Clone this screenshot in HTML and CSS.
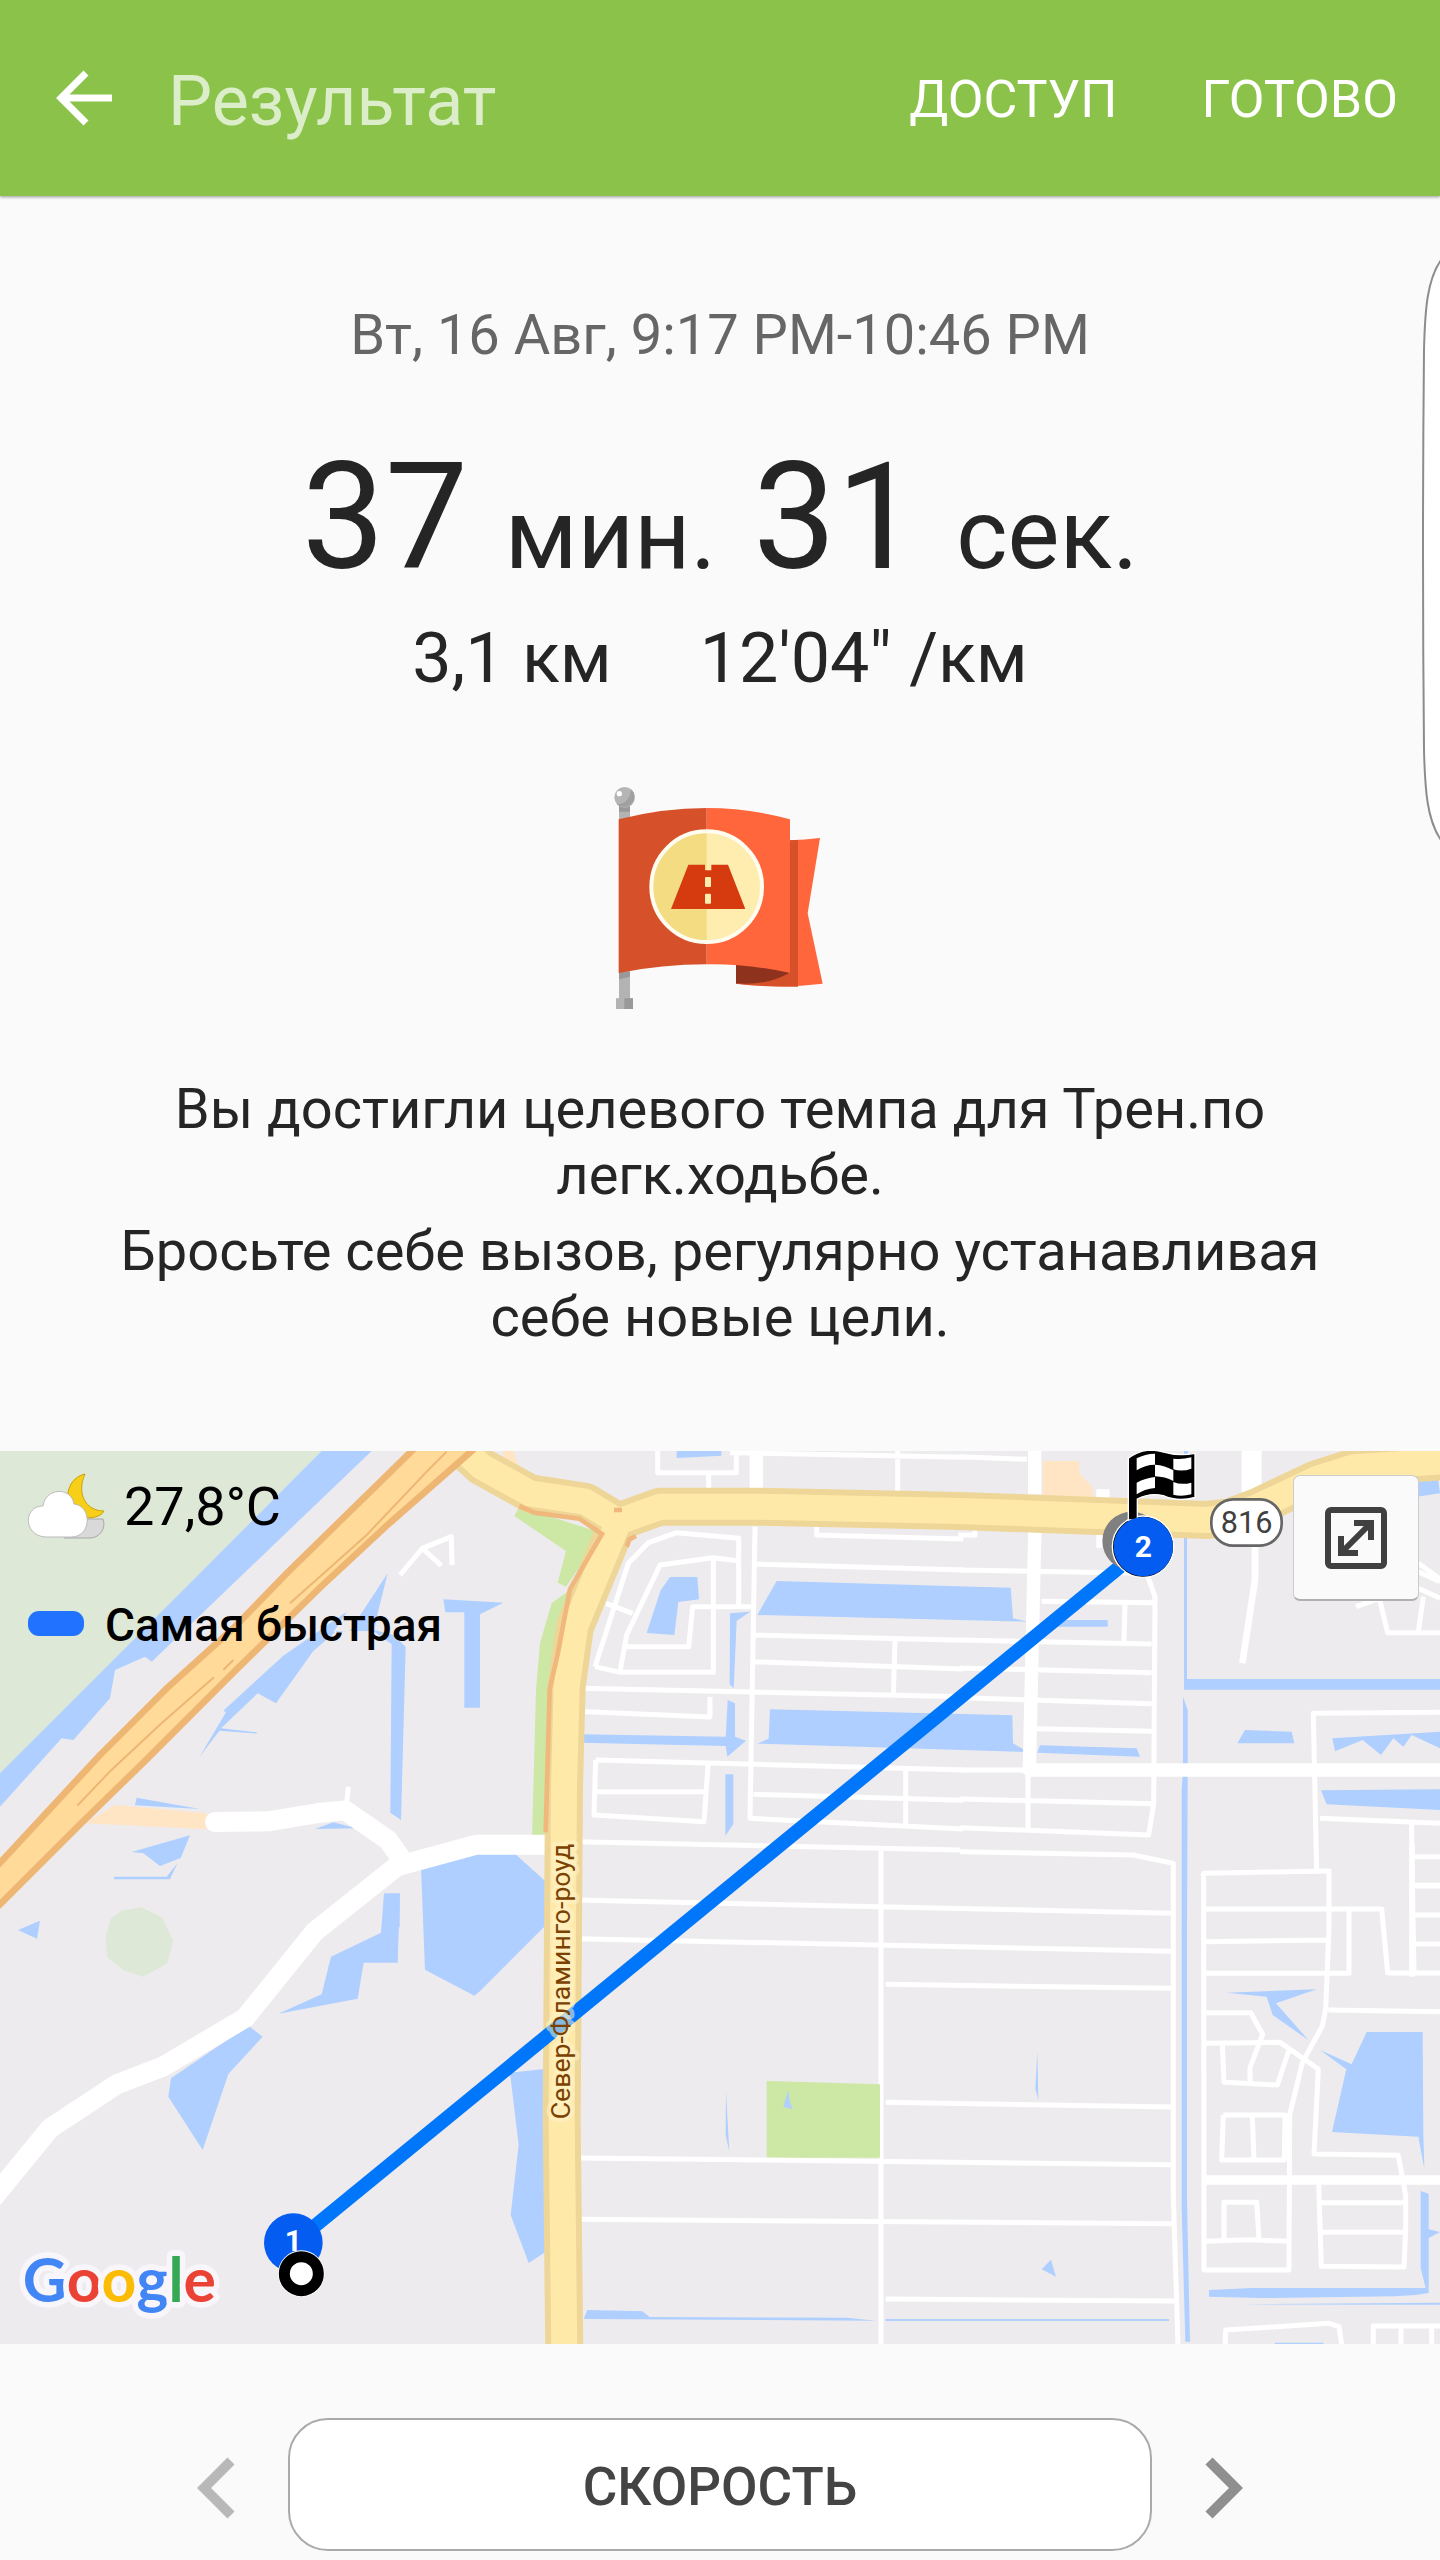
FILE: index.html
```html
<!DOCTYPE html>
<html lang="ru">

<head>
    <meta charset="UTF-8">
    <meta name="viewport" content="width=device-width, initial-scale=1.0">
    <title>Результат</title>
    <link rel="stylesheet" href="styles.css">
</head>

<body>
    <header class="topbar">
        <button type="button" class="back" aria-label="Назад">
            <svg viewBox="0 0 56 56" width="56" height="56" fill="none" stroke="#fff" stroke-width="7">
                <path d="M30 3L5 28l25 25M5 28h51" />
            </svg>
        </button>
        <h1>Результат</h1>
        <button type="button" class="action">ДОСТУП</button>
        <button type="button" class="action">ГОТОВО</button>
    </header>

    <main>
        <section class="summary">
            <p class="date">Вт, 16 Авг, 9:17 PM-10:46 PM</p>
            <p class="duration">37 <span>мин.</span> 31 <span>сек.</span></p>
            <p class="pace"><span>3,1 км</span><span>12'04" /км</span></p>

            <svg class="award" viewBox="0 0 840 810" width="280" height="270" role="img" aria-label="Цель достигнута">
                <!-- pole -->
                <path fill="#b3b3b3" d="M117 130h33v585h9v32h-51v-32h9z" />
                <path fill="#999" d="M133 715h26v32h-26zM117 139h33v16h-33zM117 635h33v15l-33 8z" />
                <circle cx="134" cy="112" r="31" fill="#b5b5b5" />
                <path fill="#a0a0a0" d="M154 88a31 31 0 0 1-44 44q36 4 44-44z" />
                <circle cx="118" cy="101" r="8" fill="#fff" />
                <!-- cloth -->
                <path fill="#ff663b" d="M629 241q46-1 91-7l-37 226 45 211q-130 15-260 0v-60h161z" />
                <path fill="#d65129" d="M629 241l25-1v440q-93 2-186-9v-60h161z" />
                <path fill="#8e321d" d="M468 610h161v28q-70 40-161 32z" />
                <path fill="#ff663b" d="M380 144q126 0 250 34v461q-124-28-250-26z" />
                <path fill="#d65129" d="M116 178q132-34 264-34v469q-133 0-264 26z" />
                <circle cx="380" cy="380" r="166" fill="#f4dc82" />
                <path fill="#ffedb0" d="M380 214a166 166 0 0 1 0 332z" />
                <circle cx="380" cy="380" r="166" fill="none" stroke="#fffcf0" stroke-width="12" />
                <path fill="#d63b10" d="M325 314h50v17h19v-17h50l52 133H273z" />
                <rect x="375" y="351" width="18" height="30" rx="3" fill="#ffedb0" />
                <rect x="375" y="401" width="18" height="30" rx="3" fill="#ffedb0" />
            </svg>

            <p class="message">Вы достигли целевого темпа для Трен.по легк.ходьбе.</p>
            <p class="message">Бросьте себе вызов, регулярно устанавливая себе новые цели.</p>
        </section>

        <section class="map" aria-label="Карта маршрута">
            <svg class="map-canvas" viewBox="0 0 4320 2679">
                <rect width="4320" height="2679" fill="#edebee" />

                <!-- north-west -->
                <g transform="translate(0 -33)">
                    <path class="wood" d="M0 33h965L350 650 0 1000z" />
                    <path class="water" d="M965 33h150L455 665l-20-15-90 40-15 85-110 125-35-5L0 1100V1000L350 650z" />
                    <path class="water" d="M1163 400l-30 120-10 50 57 15 37 35-14 520-32-22 4-505-55-40h-110l-70 60-112 157-55-30-110 105 107 12v4l-112-9-60 80 80-135-8-5 180-165 180-125 10-5-40 60 50-5zM1330 478l180 10-70 35v280h-47V517h-57zM410 1073l190 34-195-11zM395 1236l175-50-28 68-62 24-50-38zM342 1310h158l32-40-22 48H342zM945 1167l55-20 70 18zM1152 1362h47v100h-47z" />
                    <path class="ramp" d="M345 1095l275 25v48l-365-18z" />
                    <path class="way" d="M1200 405l67-80 87-35 2 85M1267 325l57 52M1045 1040l-5 50" />
                </g>
                <!-- south-west -->
                <g transform="translate(0 1287)">
                    <path class="water" d="M54 150l66-28-9 54zM345-3h160zM1152 40h48l-7 208h-102l-18 108-238 45 130-58 28-113 150-72zM1263-35l35-35 240-15 100 90v130l-60 60-140 140-15 12-148-78zM745 437l43 33-103 112-77 228-103-160 8-55z" />
                    <path class="wood" d="M365 92l60-10 60 30 35 70-18 68-72 40-60-20-48-38-5-60 15-55z" />
                </g>
                <!-- north -->
                <g transform="translate(1440 -33)">
                    <path class="water" d="M590 33h134v14l-134 7zM570 411h82l5 67-62 8-12 99-83-6 42-128zM890 423l702 20 7 92 45 10-812-20zM750 520l60-5-40 28-9 202-12-12zM743 780l22 10v100l33 12-56 48-5-32-432-10v-25l432 7zM870 808l727 18 2 84 45 26-812-25 34-15zM736 1003h24v150l-24 34z" />
                    <path class="park" d="M118 200l250 80-110 160-25-12 25-95-155-105zM262 455l-50 745h-56l12-450 12-140 35-120z" />
                    <path class="ramp" d="M66 33h35l25 75 50 30-90-40z" />
                    <path class="way" d="M533 33v65h236V33M686 98v55M1253 33v120M750 38l700 14M345 680l100-310 60-62 85-30 186 17v198M420 695l20-110 100-210 158-22 75 9M700 355v342H420l-75-17M378 490l80 30M440 620h186l12-120h175M1010 255v30l440 12M830 372l620 18M825 585l625 16M1245 600l-5 165M825 665l625 22M300 745l1150 25M300 815h20l370 16v-60M347 960l1103 30M347 960l-5 165 330 20 12-170M350 1055h330M820 1063l630 18M1277 985v175M825 260l-15 875 640 32M290 1205l1150 25M1203 1230v1500" />
                    <path class="street" d="M829 33v130" />
                </g>
                <!-- south -->
                <g transform="translate(1440 1287)">
                    <path class="water" d="M90 578l110-12v548l-54 35-54-144 24-210zM738 635l10 180-11-50zM322 1290l165 4 22 17 590 2 90 9-878-5zM1217 1317h850v6h-850z" />
                    <path class="park" d="M860 603l340 10v220H860z" />
                    <path class="water" d="M925 630l3 30 10 28-28-8z" />
                    <path class="way" d="M290 60l1790 40M290 176l1790 38M1217 313l860 12M1217 667l860 14M300 834l1780 20M300 1018l1780 13M1217 1257l865 6" />
                </g>
                <!-- north-east -->
                <g transform="translate(2880 -33)">
                    <path class="ramp" d="M248 63h107l5 40 35 35 8 45H248z" />
                    <path class="water" d="M672 33h12v25h-12zM672 190l9 1v526h760v32H672zM290 540h153v20H290zM855 870l140 5 8 35H832zM232 938l8-22 290 9 10 25zM1117 895l323-20v50l-85-40-25 35-30-25-37 50-55-45-83 34zM1083 1051l357-3v62l-340-17zM669 770l14 40v205l-2 450v820l9 420h-14l-11-400V1050l4-60zM1370 110l60-25 10 75-70 10z" />
                    <path class="way" d="M-5 50l206 8M-5 285h50v-15M0 390l560 10 25 70-4 620-15 95-566-22M245 484l335 4M495 490l-3 115M0 600l575 12M0 684l575 14M0 773l575 18M230 866l345 8M0 990h190l14 10v165M0 1077l575 14M0 1235l520 10 120 25v1000l15 480M1440 817l-380 3 10 480M1375 395l65 30M1375 445l65 30M1188 500l70-25 25 103h157M1390 470l-15 105M1375 370l70 50M1080 1135l365 15M1355 1150v460M1363 1250h77M1363 1336h77" />
                    <path class="street" d="M429 148v175M224 33v130M225 250l-17 740H1440M208 970v30" />
                    <path class="road" d="M875 33v150" />
                    <path class="lane" d="M885 310v110l-38 250" />
                </g>
                <!-- south-east -->
                <g transform="translate(2880 1287)">
                    <path class="water" d="M800 338l270-10-122 42 97 110-107-75-18-55zM1080 510l95 43 45-97h168l2 310 3 100-18-96-259-14 43-188zM1382 933l24 8v107l34 8-34 18v165q-50 10-100 10l-400 5-159-4v-20l130-6h520l-15-60zM232 515l3 145-9-35zM273 1139l15 51-43-22zM945 1388h145v8H945zM850 1273l590-5v6z" />
                    <path class="way" d="M1357-110v110l5 275M1440 18h-77M1440 105h-77M1440 192h-77M731-10l1 1180h255l2-470M727-10l5-10 375-7v170l-10 245-10 50-60 110-40 165M737 87h528l18 192h157M737 185l365-5M737 280h430V90M1105 390l335 5M737 398h135l36 65-38 100v45M737 490l223-3 115 80-13 255 253 4 22 120v100l-5 115-248-2-8-250M787 490l5 117 160 8 35-105M790 705h185l-2 135H785l5-135M877 710l5 130M792 1075V967h98l7 110M737 1084l130-5 118 5M1085 968h250M1085 1057h250M795 1400l2-50 310-20 30 10 9 60M1240 1400v-62h200M1323 1340v60M1415 1340v60" />
                    <path class="street thin" d="M737 900h703" />
                </g>

                <!-- local roads -->
                <path class="road" d="M645 1113l160-2 150-25 80-8 130 90 35 50" />
                <path class="road" d="M-20 2240l170-208 200-132 140-54 245-145 210-260 245-195 240-65h230" />

                <!-- main roads -->
                <g transform="translate(1440 -33)">
                    <path class="main-edge" d="M-60 20l65 60 145 80 165 25 100 60 125-45h300l600 13 740 27 70-8 80-30 180-85 110-35 300-20M415 245L285 560l-25 180-8 300-7 1000 8 700" />
                    <path class="main-fill" d="M-60 20l65 60 145 80 165 25 100 60 125-45h300l600 13 740 27 70-8 80-30 180-85 110-35 300-20M415 245L285 560l-25 180-8 300-7 1000 8 700" />
                    <path class="curb" d="M118 198l45 20 135 18 68 46-96 165-38 200-23 100-12 430M402 210h24M440 320l8-22 20-10" />
                </g>

                <!-- highway -->
                <g transform="translate(0 -33)">
                    <path class="highway" d="M-20 1290l320-345 200-200 200-180 160-165L1235 33l60-60h180l-60 60-245 215-210 195-260 255-260 260-200 195-260 260z" />
                    <path class="median" d="M232 1097l100-105 150-140 160-140M670 690l30-30M870 490l230-205 180-190 60-60" />
                </g>

                <!-- route -->
                <path d="M880 2378L3430 290" stroke="#0077fa" stroke-width="42" />

                <text class="street-name" transform="translate(1710 2005) rotate(-90)">Север-Фламинго-роуд</text>

                <g class="shield">
                    <rect x="3634" y="145" width="211" height="139" rx="66" />
                    <text x="3740" y="246">816</text>
                </g>

                <!-- finish -->
                <g transform="translate(2880 -33)">
                    <circle cx="515" cy="303" r="88" fill="#808080" />
                    <circle cx="549" cy="320" r="92" fill="#000" stroke="#fff" stroke-width="4" />
                    <path d="M505 240V55q45-35 100-20 50 15 100 5v132q-50 15-95-5-40-10-78 10v63z" fill="#000" stroke="#fff" stroke-width="4" />
                    <path fill="#fff" d="M530 55q25-14 55-14v33q-30 0-55 17zM640 56q25 4 54-4v34q-28 10-54 2zM585 74q30 2 55 17v32q-25-13-55-14zM530 128q26-14 55-17v33q-32 3-55 19zM640 126q25 10 54 2v35q-30 8-54 1z" />
                </g>
                <circle class="pin" cx="3430" cy="287" r="89" />
                <text class="pin-text" x="3430" y="318">2</text>

                <!-- start -->
                <circle class="pin" cx="880" cy="2375" r="88" />
                <text class="pin-text" x="880" y="2400">1</text>
                <circle cx="904" cy="2468" r="70" fill="#fff" />
                <circle cx="904" cy="2468" r="51" fill="#fff" stroke="#000" stroke-width="33" />

                <text class="google" x="68" y="2553"><tspan fill="#4285f4">G</tspan><tspan fill="#ea4335">o</tspan><tspan fill="#fbbc05">o</tspan><tspan fill="#4285f4">g</tspan><tspan fill="#34a853">l</tspan><tspan fill="#ea4335">e</tspan></text>
            </svg>

            <div class="map-info">
                <p class="weather">
                    <svg viewBox="0 0 80 68" width="80" height="68" aria-hidden="true">
                        <path d="M43 46h34a14 14 0 0 1-14 19H38z" fill="#d9d9d9" stroke="#a8a8a8" />
                        <path d="M59 1C37 6 36 38 56 44c9 2 19 0 22-6-18 0-28-17-19-37z" fill="#f7cf18" stroke="#c9a20a" />
                        <path d="M20 64C-3 63-3 33 17 33c2-18 28-20 31-2 18 2 18 32-2 33z" fill="#fff" stroke="#bbb" />
                    </svg>
                    <span>27,8°C</span>
                </p>
                <p class="legend"><i class="swatch"></i><span>Самая быстрая</span></p>
            </div>

            <button type="button" class="expand" aria-label="Развернуть карту">
                <svg viewBox="0 0 62 62" width="62" height="62" fill="none" stroke="#404040" stroke-width="6">
                    <rect x="3" y="3" width="56" height="56" rx="3" />
                    <path d="M29 16h17v17M46 16L16 46M33 46H16V29" />
                </svg>
            </button>
        </section>

        <nav class="switcher">
            <button type="button" class="arrow prev" aria-label="Предыдущий">
                <svg viewBox="0 0 38 62" width="38" height="62" fill="none" stroke="currentColor" stroke-width="10"><path d="M34 4L7 31l27 27" /></svg>
            </button>
            <button type="button" class="mode">СКОРОСТЬ</button>
            <button type="button" class="arrow next" aria-label="Следующий">
                <svg viewBox="0 0 38 62" width="38" height="62" fill="none" stroke="currentColor" stroke-width="10"><path d="M4 4l27 27L4 58" /></svg>
            </button>
        </nav>
    </main>

    <!-- edge panel handle -->
    <svg class="edge" viewBox="0 0 18 580" width="18" height="580" aria-hidden="true">
        <path d="M19 0C5 20 3 50 2 90Q0 290 2 490C3 530 5 560 19 580" fill="#fff" stroke="#8c8c8c" stroke-width="2" />
    </svg>
</body>

</html>
```
FILE: styles.css
```css
* {
    box-sizing: border-box;
}

body {
    position: relative;
    margin: 0;
    background: #fafafa;
    color: #252525;
    font-family: Roboto, "Noto Sans", sans-serif;
    overflow-x: hidden;
}

h1,
p {
    margin: 0;
    font-weight: 400;
}

svg {
    display: block;
}

button {
    margin: 0;
    padding: 0;
    border: none;
    background: none;
    font-family: inherit;
    cursor: pointer;
}

/* top bar */
.topbar {
    display: flex;
    align-items: center;
    height: 196px;
    padding: 0 42px 0 56px;
    background: #8bc34a;
    box-shadow: 0 1px 3px rgba(0, 0, 0, 0.4);
}

.topbar h1 {
    flex: 1;
    margin-left: 56px;
    padding-top: 6px;
    color: rgba(255, 255, 255, 0.7);
    font-size: 70px;
    line-height: 82px;
}

.action {
    margin-left: 84px;
    padding-top: 4px;
    color: #fff;
    font-size: 52px;
    line-height: 66px;
}

/* workout summary */
.summary {
    display: flex;
    flex-direction: column;
    align-items: center;
    padding: 106px 100px;
    text-align: center;
}

.date {
    color: #666;
    font-size: 56px;
    line-height: 66px;
}

.duration {
    margin-top: 64px;
    font-size: 148px;
    line-height: 172px;
}

.duration span {
    font-size: 98px;
    line-height: 1;
}

.pace {
    display: flex;
    gap: 88px;
    margin-top: 13px;
    font-size: 70px;
    line-height: 82px;
}

.award {
    margin: 61px 0 46px;
}

.message {
    font-size: 56px;
    line-height: 66px;
}

.message + .message {
    margin-top: 10px;
}

/* map */
.map {
    position: relative;
    margin-top: -5px;
}

.map-canvas {
    width: 100%;
    height: auto;
    fill: none;
}

.water {
    fill: #aecfff;
}

.wood {
    fill: #dde8d7;
}

.park {
    fill: #cde7a5;
}

.ramp {
    fill: #ffe5c4;
}

.way,
.lane,
.street,
.road {
    stroke: #fff;
    stroke-width: 15;
    stroke-linejoin: round;
}

.lane {
    stroke-width: 20;
}

.street {
    stroke-width: 40;
}

.street.thin {
    stroke-width: 28;
}

.road {
    stroke-width: 60;
    stroke-linecap: round;
}

.highway {
    fill: #ffda99;
    stroke: #eeb673;
    stroke-width: 20;
}

.median {
    stroke: #eeb673;
    stroke-width: 6;
}

.main-edge {
    stroke: #eed698;
    stroke-width: 114;
    stroke-linejoin: round;
}

.main-fill {
    stroke: #ffe9a9;
    stroke-width: 78;
    stroke-linejoin: round;
}

.curb {
    stroke: #f0b87c;
    stroke-width: 14;
}

.street-name {
    fill: #7a4100;
    stroke: rgba(255, 243, 200, 0.55);
    stroke-width: 26;
    stroke-linejoin: round;
    paint-order: stroke;
    font-size: 80px;
}

.shield rect {
    fill: #fff;
    stroke: #666;
    stroke-width: 8;
}

.shield text {
    fill: #404040;
    font-size: 92px;
    text-anchor: middle;
}

.pin {
    fill: #045cf0;
}

.pin-text {
    fill: #fff;
    font-size: 90px;
    font-weight: 700;
    text-anchor: middle;
}

.google {
    stroke: #f8f6fa;
    stroke-width: 34;
    stroke-linejoin: round;
    paint-order: stroke;
    font-family: Lato, sans-serif;
    font-size: 182px;
    font-weight: 700;
}

.map-info {
    position: absolute;
    top: 21px;
    left: 26px;
    color: #000;
}

.weather,
.legend {
    display: flex;
    align-items: center;
}

.weather {
    gap: 18px;
    font-size: 54px;
    line-height: 70px;
}

.legend {
    gap: 21px;
    margin-top: 53px;
    padding-left: 2px;
    font-size: 46px;
    font-weight: 500;
    line-height: 60px;
}

.swatch {
    width: 56px;
    height: 25px;
    margin-bottom: 4px;
    border-radius: 11px;
    background: #2173ff;
}

.expand {
    position: absolute;
    top: 24px;
    right: 21px;
    display: grid;
    place-items: center;
    width: 126px;
    height: 126px;
    border: 1px solid #ccc;
    border-bottom: 2px solid #b0b0b0;
    border-radius: 7px;
    background: #fafafa;
}

/* chart switcher */
.switcher {
    display: flex;
    align-items: center;
    justify-content: center;
    gap: 53px;
    padding: 74px 0 9px;
}

.arrow {
    padding-top: 6px;
}

.mode {
    width: 60%;
    height: 133px;
    padding-top: 4px;
    border: 2px solid #aaa;
    border-radius: 40px;
    background: #fff;
    color: #444;
    font-size: 53px;
    font-weight: 500;
}

.prev {
    color: #b8b8b8;
}

.next {
    color: #8f8f8f;
}

.edge {
    position: absolute;
    top: 260px;
    right: 0;
}
```
